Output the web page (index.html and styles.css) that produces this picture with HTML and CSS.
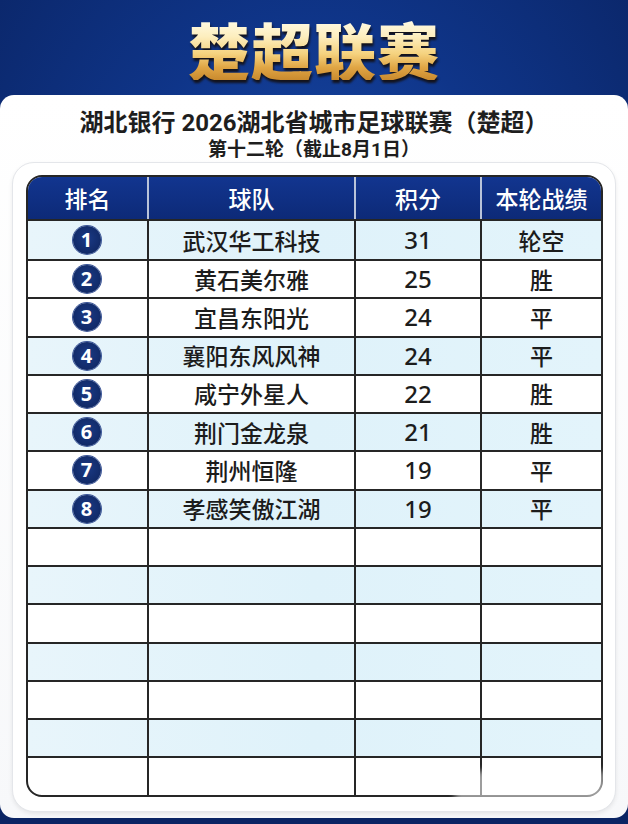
FILE: index.html
```html
<!DOCTYPE html>
<html lang="zh-CN">
<head>
<meta charset="utf-8">
<title>楚超联赛</title>
<link rel="stylesheet" href="styles.css">
</head>
<body>
<div class="page">
  <header class="hero">
    <h1 class="brand">楚超联赛</h1>
  </header>
  <main class="card">
    <h2 class="title">湖北银行 2026湖北省城市足球联赛（楚超）</h2>
    <p class="subtitle">第十二轮（截止8月1日）</p>
    <section class="panel">
      <div class="table">
        <div class="row head">
          <div class="cell">排名</div>
          <div class="cell">球队</div>
          <div class="cell">积分</div>
          <div class="cell">本轮战绩</div>
        </div>
        <div class="row blue">
          <div class="cell"><span class="rank">1</span></div>
          <div class="cell">武汉华工科技</div>
          <div class="cell num">31</div>
          <div class="cell">轮空</div>
        </div>
        <div class="row">
          <div class="cell"><span class="rank">2</span></div>
          <div class="cell">黄石美尔雅</div>
          <div class="cell num">25</div>
          <div class="cell">胜</div>
        </div>
        <div class="row">
          <div class="cell"><span class="rank">3</span></div>
          <div class="cell">宜昌东阳光</div>
          <div class="cell num">24</div>
          <div class="cell">平</div>
        </div>
        <div class="row blue">
          <div class="cell"><span class="rank">4</span></div>
          <div class="cell">襄阳东风风神</div>
          <div class="cell num">24</div>
          <div class="cell">平</div>
        </div>
        <div class="row">
          <div class="cell"><span class="rank">5</span></div>
          <div class="cell">咸宁外星人</div>
          <div class="cell num">22</div>
          <div class="cell">胜</div>
        </div>
        <div class="row blue">
          <div class="cell"><span class="rank">6</span></div>
          <div class="cell">荆门金龙泉</div>
          <div class="cell num">21</div>
          <div class="cell">胜</div>
        </div>
        <div class="row">
          <div class="cell"><span class="rank">7</span></div>
          <div class="cell">荆州恒隆</div>
          <div class="cell num">19</div>
          <div class="cell">平</div>
        </div>
        <div class="row blue">
          <div class="cell"><span class="rank">8</span></div>
          <div class="cell">孝感笑傲江湖</div>
          <div class="cell num">19</div>
          <div class="cell">平</div>
        </div>
        <div class="row"><div class="cell"></div><div class="cell"></div><div class="cell"></div><div class="cell"></div></div>
        <div class="row blue"><div class="cell"></div><div class="cell"></div><div class="cell"></div><div class="cell"></div></div>
        <div class="row"><div class="cell"></div><div class="cell"></div><div class="cell"></div><div class="cell"></div></div>
        <div class="row blue"><div class="cell"></div><div class="cell"></div><div class="cell"></div><div class="cell"></div></div>
        <div class="row"><div class="cell"></div><div class="cell"></div><div class="cell"></div><div class="cell"></div></div>
        <div class="row blue"><div class="cell"></div><div class="cell"></div><div class="cell"></div><div class="cell"></div></div>
        <div class="row"><div class="cell"></div><div class="cell"></div><div class="cell"></div><div class="cell"></div></div>
      </div>
      <div class="watermark"></div>
    </section>
  </main>
</div>
</body>
</html>
```

FILE: styles.css
```css
* { box-sizing: border-box; }

html, body {
  margin: 0;
  padding: 0;
}

body {
  width: 628px;
  height: 824px;
  overflow: hidden;
  background: #0b1f52;
  font-family: "Noto Sans CJK SC", "Noto Sans", sans-serif;
  color: #1c1c1c;
}

.page {
  width: 628px;
  height: 824px;
  display: flex;
  flex-direction: column;
  background: radial-gradient(ellipse 70% 60% at 50% 30%, #1a4cab 0%, #0f3589 45%, #0a2464 100%);
}

.hero {
  height: 95px;
  display: flex;
  align-items: center;
  justify-content: center;
  padding-top: 3px;
}

.brand {
  margin: 0;
  font-size: 62px;
  line-height: 1;
  font-weight: 900;
  letter-spacing: 1px;
  background: linear-gradient(180deg, #fffcea 0%, #fdeebe 30%, #f5d27e 58%, #e0a544 80%, #c98a2e 100%);
  -webkit-background-clip: text;
  background-clip: text;
  color: transparent;
  filter: drop-shadow(1px 3px 1px rgba(20, 10, 0, 0.8));
}

.card {
  height: 723px;
  background: linear-gradient(180deg, #ffffff 0%, #f7f8fa 100%);
  border-radius: 14px;
  padding: 13px 12px 6px;
  display: flex;
  flex-direction: column;
  align-items: center;
}

.title {
  margin: 0;
  font-family: Roboto, "Noto Sans CJK SC", sans-serif;
  font-size: 24px;
  line-height: 30px;
  font-weight: 700;
  color: #1e1e1e;
  white-space: nowrap;
}

.subtitle {
  margin: 0;
  font-family: Roboto, "Noto Sans CJK SC", sans-serif;
  font-size: 19px;
  line-height: 24px;
  font-weight: 700;
  color: #1e1e1e;
}

.panel {
  position: relative;
  width: 604px;
  height: 650px;
  background: #ffffff;
  border: 1px solid #e4e6ea;
  border-radius: 22px;
  box-shadow: 0 2px 4px rgba(0, 0, 0, 0.08);
  padding: 12px 12px 16px 13px;
}

.table {
  width: 577px;
  border: 2px solid #262626;
  border-radius: 16px;
  overflow: hidden;
  background: #ffffff;
}

.row {
  display: grid;
  grid-template-columns: 121px 207px 126px 119px;
  height: 38.27px;
  border-top: 2px solid #262626;
}

.row.blue {
  background: linear-gradient(90deg, #e8f5fb 0%, #dff2fa 50%, #e3f4fb 100%);
}

.row.head {
  height: 42px;
  border-top: none;
  background: linear-gradient(180deg, #12358f 0%, #0d2a78 100%);
  color: #ffffff;
  font-weight: 700;
  font-size: 23px;
}

.row.head .cell {
  border-right-color: #b9c3d9;
}

.row.head + .row {
  height: 40px;
}

.cell {
  display: flex;
  align-items: center;
  justify-content: center;
  border-right: 2px solid #262626;
  font-size: 23px;
  font-weight: 500;
  line-height: 1;
  white-space: nowrap;
}

.cell:last-child {
  border-right: none;
}

.num {
  font-family: "Noto Sans", "Noto Sans CJK SC", sans-serif;
  font-size: 24px;
}

.rank {
  width: 28px;
  height: 28px;
  margin-left: -2px;
  border-radius: 50%;
  background: radial-gradient(circle at 50% 45%, #1a3a85 0%, #112a68 70%, #0d2259 100%);
  box-shadow: 0 0 0 1px #3a5598;
  color: #ffffff;
  font-family: "Noto Sans", sans-serif;
  font-weight: 700;
  font-size: 20px;
  line-height: 28px;
  text-align: center;
}

.watermark {
  position: absolute;
  right: 10px;
  bottom: 10px;
  width: 150px;
  height: 30px;
  background: rgba(255, 255, 255, 0.55);
  filter: blur(3px);
}
```
